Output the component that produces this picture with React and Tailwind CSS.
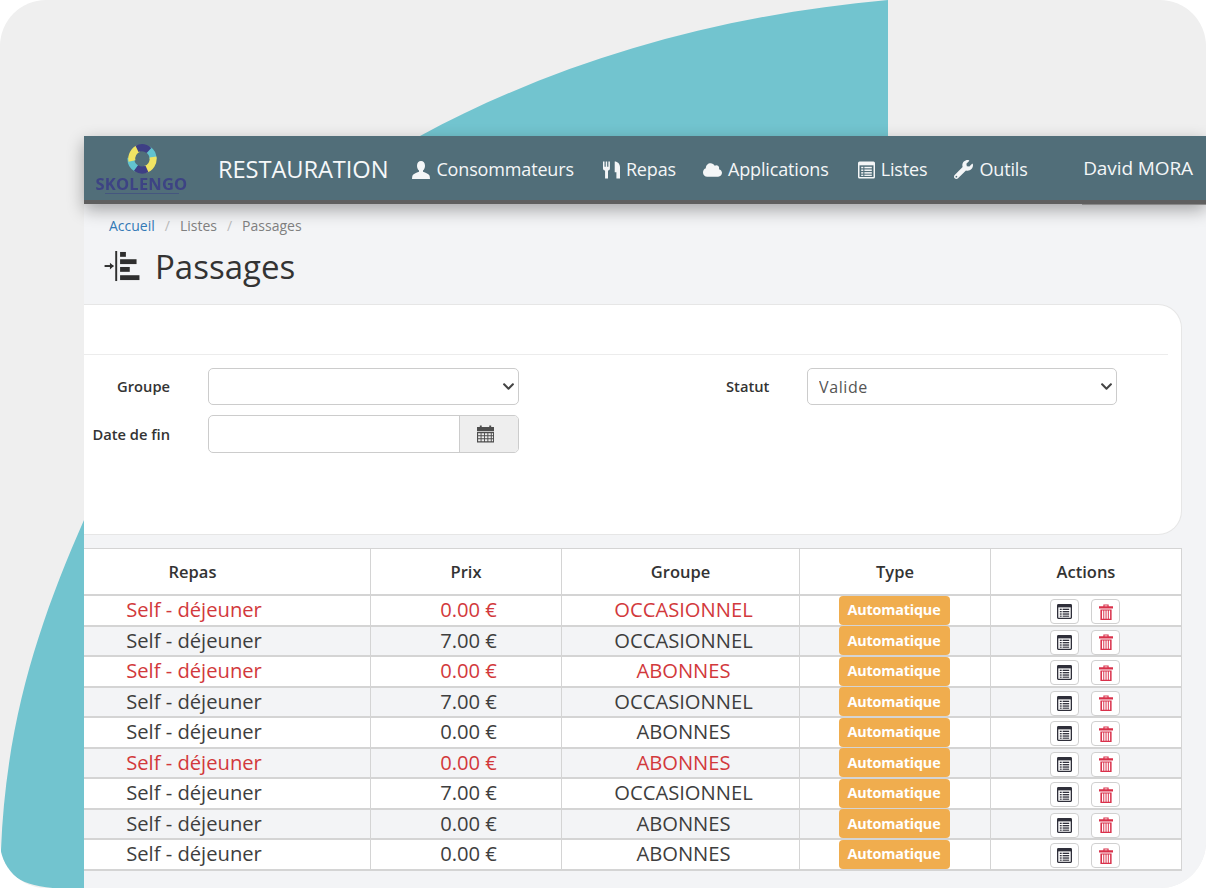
import React from "react";
import { FaCloud, FaWrench, FaChevronDown } from "react-icons/fa";

function ListAlt({ className }) {
  return (
    <svg viewBox="0 0 16 16" className={className}>
      <rect x="0.7" y="0.7" width="14.6" height="14.6" rx="0.8" fill="none" stroke="currentColor" strokeWidth="1.4" />
      <rect x="1" y="1" width="14" height="2.6" fill="currentColor" />
      <g fill="currentColor">
        <rect x="3" y="5" width="2" height="1.4" />
        <rect x="6" y="5" width="7" height="1.4" />
        <rect x="3" y="7.5" width="2" height="1.4" />
        <rect x="6" y="7.5" width="7" height="1.4" />
        <rect x="3" y="10" width="2" height="1.4" />
        <rect x="6" y="10" width="7" height="1.4" />
        <rect x="3" y="12.4" width="2" height="1.2" />
        <rect x="6" y="12.4" width="7" height="1.2" />
      </g>
    </svg>
  );
}

function Trash({ className }) {
  return (
    <svg viewBox="0 0 16 18" className={className}>
      <g fill="currentColor">
        <path d="M5 0.5h6v2h5V5H0V2.5h5zM6.3 1.7v0.8h3.4V1.7z" fillRule="evenodd" />
        <path d="M1.6 6h12.8v12H1.6zM3.4 7.4v9.2h1.5V7.4zM6 7.4v9.2h1.5V7.4zM8.6 7.4v9.2h1.5V7.4zM11.2 7.4v9.2h1.5V7.4z" fillRule="evenodd" />
      </g>
    </svg>
  );
}

function Person({ className }) {
  return (
    <svg viewBox="0 0 18 18" className={className} fill="currentColor">
      <path d="M9 0C6.6 0 5 2 5 4.8c0 2 .8 3.8 2 4.8v1.2c-2.6 1-6 2.2-6.6 4C.2 16 0 17 0 18h18c0-1-.2-2-.4-3.2-.6-1.8-4-3-6.6-4V9.6c1.2-1 2-2.8 2-4.8C13 2 11.4 0 9 0z" />
    </svg>
  );
}

function Cutlery({ className }) {
  return (
    <svg viewBox="0 0 18 18" className={className} fill="currentColor">
      <path d="M0 0h1.6v5.6h1.3V0h1.5v5.6h1.3V0h1.6v7.4c0 1.2-.9 2-2 2.3V18H2.2V9.7C1 9.4 0 8.6 0 7.4z" />
      <path d="M12.4 0C15.5 0 18 2.5 18 6v12h-3.8v-6.6h-1.8z" />
    </svg>
  );
}

function Calendar({ className }) {
  return (
    <svg viewBox="0 0 18 18" className={className} fill="currentColor">
      <path d="M3 0h2v1.5h8V0h2v1.5h3V6H0V1.5h3z" />
      <path d="M0 7h18v11H0zM1.2 8.2v2h2.6v-2zM4.8 8.2v2h2.6v-2zM8.4 8.2v2h2.6v-2zM12 8.2v2h2.6v-2zM15.6 8.2v2h1.4v-2zM1.2 11.4v2h2.6v-2zM4.8 11.4v2h2.6v-2zM8.4 11.4v2h2.6v-2zM12 11.4v2h2.6v-2zM15.6 11.4v2h1.4v-2zM1.2 14.6v2h2.6v-2zM4.8 14.6v2h2.6v-2zM8.4 14.6v2h2.6v-2zM12 14.6v2h2.6v-2zM15.6 14.6v2h1.4v-2z" fillRule="evenodd" />
    </svg>
  );
}

function Logo() {
  return (
    <div className="flex w-[93px] flex-col items-center blur-[0.6px]">
      <svg viewBox="0 0 30 30" className="h-[30px] w-[30px]">
        <g fill="none" strokeWidth="7">
          <path d="M9.5 24.5 A 11 11 0 0 1 4 14" stroke="#62c3cf" />
          <path d="M5 17 A 11 11 0 0 1 12 4.4" stroke="#f0e463" />
          <path d="M21 5.5 A 11 11 0 0 1 26 15" stroke="#62c3cf" />
          <path d="M10 4.8 A 11 11 0 0 1 22 6.5" stroke="#3e3f85" />
          <path d="M26 13 A 11 11 0 0 1 18 25.5" stroke="#f0e463" />
          <path d="M20 25 A 11 11 0 0 1 9 24" stroke="#3e3f85" />
        </g>
      </svg>
      <span className="mt-[1px] text-[16.5px] leading-[17px] font-bold tracking-[0.2px] text-[#3d4384]">SKOLENGO</span>
      <div className="mt-[1px] h-px w-[74px] bg-[#45567f]" />
    </div>
  );
}

function NavItem({ icon, label, className = "" }) {
  return (
    <span className={`flex items-center gap-[6px] text-[18px] text-[#f4f6f7] ${className}`}>
      {icon}
      <span className="tracking-[-0.15px]">{label}</span>
    </span>
  );
}

function Select({ width, children, className }) {
  return (
    <div className={`relative ml-[38px] h-[37px] ${width}`}>
      <select className={`h-full w-full appearance-none rounded-[5px] border border-[#ccc] bg-white text-[16px] text-[#555] ${className}`}>
        {children}
      </select>
      <FaChevronDown className="pointer-events-none absolute top-[12px] right-[4px] h-[13px] w-[13px] text-[#444]" />
    </div>
  );
}

const rows = [
  ["0.00 €", "OCCASIONNEL", true, true],
  ["7.00 €", "OCCASIONNEL", false, false],
  ["0.00 €", "ABONNES", true, true],
  ["7.00 €", "OCCASIONNEL", false, false],
  ["0.00 €", "ABONNES", false, true],
  ["0.00 €", "ABONNES", true, false],
  ["7.00 €", "OCCASIONNEL", false, true],
  ["0.00 €", "ABONNES", false, false],
  ["0.00 €", "ABONNES", false, true],
];

const COLS = "grid grid-cols-[287px_191px_238px_191px_190px]";

function Row({ r }) {
  const [prix, groupe, red, white] = r;
  const cell = "flex items-center justify-center border-r border-[#d4d4d4] last:border-r-0";
  return (
    <div className={`${COLS} grid-rows-[28.5px] h-[30.5px] border-b-[2px] border-[#d4d4d4] text-[20.2px] leading-none ${white ? "bg-white" : "bg-[#f3f4f6]"} ${red ? "text-[#d2393c]" : "text-[#3e3e3e]"}`}>
      <div className={`${cell} pr-[66px] pb-[2px]`}>Self - déjeuner</div>
      <div className={`${cell} pl-[5px] pb-[2px]`}>{prix}</div>
      <div className={`${cell} pl-[6px] pb-[2px]`}>{groupe}</div>
      <div className={`${cell} pr-[2px]`}>
        <span className="flex h-[29px] w-[111px] shrink-0 items-center justify-center rounded-[4px] bg-[#f0ad4e] text-[14.4px] font-bold tracking-[-0.2px] text-white">Automatique</span>
      </div>
      <div className={`${cell} gap-[12px] pt-[3px] pr-[2px]`}>
        <span className="flex h-[25px] w-[29px] items-center justify-center rounded-[4px] border border-[#d0d0d0] bg-white text-[#2f2f3a]">
          <ListAlt className="h-[15px] w-[15px]" />
        </span>
        <span className="flex h-[25px] w-[29px] items-center justify-center rounded-[4px] border border-[#d0d0d0] bg-white text-[#d9304a]">
          <Trash className="h-[16px] w-[14px]" />
        </span>
      </div>
    </div>
  );
}

export default function App() {
  return (
    <div className="h-[888px] w-[1206px] bg-white font-['Open_Sans',sans-serif]">
      <div className="relative h-[888px] w-[1206px] overflow-hidden rounded-[46px] bg-[#efefef] pt-[136px] pl-[84px]">
        <svg viewBox="0 0 1206 888" className="absolute top-0 left-0 h-[888px] w-[1206px]">
          <path
            d="M888 0 V300 H84 V888 H60 C20 888 0 870 1 850 C6 720 40 620 84 520 C170 340 290 210 420 136 C560 60 720 15 888 0 Z"
            fill="#72c4cf"
          />
        </svg>
        <div className="relative flex h-[752px] flex-col bg-[#f3f4f6]">
          <header className="relative flex h-[68px] shrink-0 items-center border-b-[4px] border-[#5f5f5f] bg-[#516e79] shadow-[0_6px_16px_rgba(0,0,0,0.33)]">
            <div className="ml-[11px] mt-[1px]"><Logo /></div>
            <span className="ml-[30px] mt-[4px] text-[23.7px] tracking-[-0.1px] text-[#f6f8f9]">RESTAURATION</span>
            <div className="ml-[24px] mt-[3px] flex items-center gap-[28px]">
              <NavItem icon={<Person className="h-[18px] w-[18px]" />} label="Consommateurs" />
              <NavItem className="ml-[1px]" icon={<Cutlery className="h-[18px] w-[17px]" />} label="Repas" />
              <NavItem className="-ml-[1px]" icon={<FaCloud className="h-[16px] w-[19px]" />} label="Applications" />
              <NavItem className="ml-[1px]" icon={<ListAlt className="h-[18px] w-[17px]" />} label="Listes" />
              <NavItem className="-ml-[1px]" icon={<FaWrench className="h-[19px] w-[19px]" />} label="Outils" />
            </div>
            <span className="absolute top-[18px] right-[13px] text-[19px] tracking-[-0.1px] text-[#f4f6f7]">David MORA</span>
            <div className="absolute right-0 -bottom-[5px] h-px w-[124px] bg-[#8a8a8a]" />
          </header>

          <div className="ml-[25px] mt-[13px] flex items-center gap-[10px] text-[14px] leading-[18px] text-[#808080]">
            <span className="text-[#337ab7]">Accueil</span>
            <span className="text-[#bbb]">/</span>
            <span>Listes</span>
            <span className="text-[#bbb]">/</span>
            <span>Passages</span>
          </div>

          <div className="ml-[20px] mt-[8px] flex h-[46px] items-center gap-[14px] text-[#333]">
            <svg viewBox="0 0 37 32" className="h-[31px] w-[37px]">
              <g fill="#2e2e2e">
                <rect x="11" y="0" width="2" height="31" />
                <rect x="0" y="14.5" width="9" height="2" />
                <path d="M5.5 12 L9.5 15.5 L5.5 19 Z" />
                <rect x="16" y="1" width="6" height="5" />
                <rect x="16" y="8.5" width="17" height="5" />
                <rect x="16" y="16.5" width="10" height="5" />
                <rect x="16" y="25" width="20" height="5" />
              </g>
            </svg>
            <span className="text-[33px] leading-none">Passages</span>
          </div>

          <section className="mt-[15px] mr-[24px] h-[231px] shrink-0 rounded-r-[24px] border border-l-0 border-[#e6e6e6] bg-white">
            <div className="mr-[13px] h-[50px] border-b border-[#ececec]" />
            <div className="flex pt-[13px]">
              <div className="flex flex-col gap-[10px]">
                <div className="flex h-[37px] items-center">
                  <label className="w-[86px] text-right text-[14.7px] font-semibold text-[#333]">Groupe</label>
                  <Select width="w-[311px]" className="pl-[10px]"><option></option></Select>
                </div>
                <div className="flex h-[38px] items-center">
                  <label className="w-[86px] text-right text-[14.7px] font-semibold whitespace-nowrap text-[#333]">Date de fin</label>
                  <div className="ml-[38px] flex h-[38px] w-[311px] overflow-hidden rounded-[5px] border border-[#ccc] bg-white">
                    <div className="flex-1" />
                    <div className="flex w-[59px] items-center justify-center border-l border-[#ccc] bg-[#eee] pr-[8px] text-[#4d4d4d]">
                      <Calendar className="h-[18px] w-[17px]" />
                    </div>
                  </div>
                </div>
              </div>
              <div className="ml-[207px] flex h-[37px] items-center">
                <label className="w-[43px] text-[14.7px] font-semibold text-[#333]">Statut</label>
                <Select width="w-[310px]" className="pl-[11px] tracking-[0.6px]"><option>Valide</option></Select>
              </div>
            </div>
          </section>

          <section className="mt-[13px] mr-[24px] shrink-0 border-t border-r border-[#d4d4d4] bg-white">
            <div className={`${COLS} h-[47px] border-b-[2px] border-[#d4d4d4] text-[16.5px] font-semibold text-[#333]`}>
              {[["Repas", "pr-[69px]"], ["Prix", ""], ["Groupe", ""], ["Type", ""], ["Actions", ""]].map(([h, extra]) => (
                <div key={h} className={`flex items-center justify-center border-r border-[#d4d4d4] pt-[1px] last:border-r-0 ${extra}`}>{h}</div>
              ))}
            </div>
            {rows.map((r, i) => <Row key={i} r={r} />)}
          </section>
        </div>
      </div>
    </div>
  );
}
